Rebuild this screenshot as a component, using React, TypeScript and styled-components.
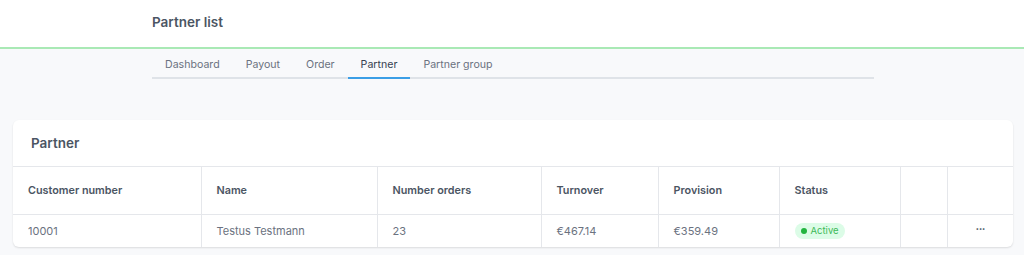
import React from "react";
import styled, { createGlobalStyle } from "styled-components";

const Global = createGlobalStyle`
  html, body { margin: 0; padding: 0; background: #f8f9fb; }
  body { font-family: Inter, "Noto Sans", sans-serif; -webkit-font-smoothing: antialiased; }
  * { box-sizing: border-box; }
`;

const Page = styled.div`
  width: 1024px;
  min-height: 255px;
  background: #f8f9fb;
`;

const TopBar = styled.header`
  height: 49px;
  background: #fff;
  border-bottom: 2px solid #a9e9b5;
  display: flex;
  align-items: center;
  padding-left: 152px;
  padding-bottom: 4px;
`;

const PageTitle = styled.h1`
  margin: 0;
  font-size: 13.5px;
  font-weight: 600;
  color: #4b5563;
`;

const TabBar = styled.nav`
  margin-left: 152px;
  width: 722px;
  display: flex;
  border-bottom: 2px solid #dfe3e8;
`;

const Tab = styled.div<{ $active?: boolean }>`
  height: 30px;
  padding: 2px 13px 0;
  display: flex;
  align-items: center;
  font-size: 10.6px;
  color: ${(p) => (p.$active ? "#374151" : "#6b7280")};
  margin-bottom: -2px;
  border-bottom: 2px solid ${(p) => (p.$active ? "#3b9ee6" : "transparent")};
`;

const Content = styled.main`
  padding: 41px 11px 0 13px;
`;

const Card = styled.section`
  background: #fff;
  border-radius: 6px;
  box-shadow: 0 1px 2px rgba(0, 0, 0, 0.12);
  overflow: hidden;
`;

const CardTitle = styled.h2`
  margin: 0;
  height: 47px;
  display: flex;
  align-items: center;
  padding-left: 18px;
  font-size: 13.5px;
  font-weight: 600;
  color: #4b5563;
  border-bottom: 1px solid #e5e7eb;
`;

const Table = styled.table`
  width: 100%;
  border-collapse: collapse;
  table-layout: fixed;
`;

const Th = styled.th`
  height: 47px;
  padding: 0 15px;
  text-align: left;
  font-size: 10.8px;
  font-weight: 600;
  color: #4b5563;
  border-left: 1px solid #e5e7eb;
  border-bottom: 1px solid #e5e7eb;
  &:first-child { border-left: none; }
`;

const Td = styled.td<{ $center?: boolean }>`
  height: 33px;
  padding: 0 15px;
  font-size: 11px;
  color: #6b7280;
  text-align: ${(p) => (p.$center ? "center" : "left")};
  border-left: 1px solid #e5e7eb;
  &:first-child { border-left: none; }
`;

const Badge = styled.span`
  display: inline-flex;
  align-items: center;
  gap: 4px;
  height: 16px;
  padding: 0 6px 0 6px;
  border-radius: 8px;
  background: #dcfce7;
  color: #3fb95a;
  font-size: 9.5px;
`;

const Dot = styled.span`
  width: 6px;
  height: 6px;
  border-radius: 50%;
  background: #22b43f;
`;

const More = styled.span`
  font-size: 11px;
  font-weight: 700;
  color: #4b5563;
  letter-spacing: -0.5px;
  position: relative;
  top: -2px;
`;

const widths = [188, 176, 164, 117, 121, 121, 47, 66];
const tabs = ["Dashboard", "Payout", "Order", "Partner", "Partner group"];

export default function App() {
  return (
    <Page>
      <Global />
      <TopBar>
        <PageTitle>Partner list</PageTitle>
      </TopBar>
      <TabBar>
        {tabs.map((t) => (
          <Tab key={t} $active={t === "Partner"}>
            {t}
          </Tab>
        ))}
      </TabBar>
      <Content>
        <Card>
          <CardTitle>Partner</CardTitle>
          <Table>
            <colgroup>
              {widths.map((w, i) => (
                <col key={i} style={{ width: w }} />
              ))}
            </colgroup>
            <thead>
              <tr>
                <Th>Customer number</Th>
                <Th>Name</Th>
                <Th>Number orders</Th>
                <Th>Turnover</Th>
                <Th>Provision</Th>
                <Th>Status</Th>
                <Th></Th>
                <Th></Th>
              </tr>
            </thead>
            <tbody>
              <tr>
                <Td>10001</Td>
                <Td>Testus Testmann</Td>
                <Td>23</Td>
                <Td>€467.14</Td>
                <Td>€359.49</Td>
                <Td>
                  <Badge>
                    <Dot />
                    Active
                  </Badge>
                </Td>
                <Td></Td>
                <Td $center>
                  <More>···</More>
                </Td>
              </tr>
            </tbody>
          </Table>
        </Card>
      </Content>
    </Page>
  );
}
